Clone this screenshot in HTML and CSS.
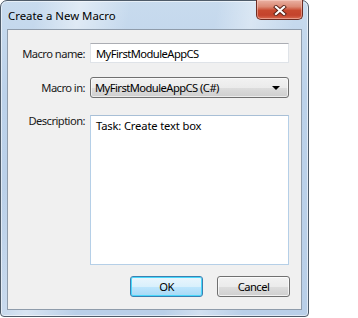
FILE: index.html
```html
<!DOCTYPE html>
<html lang="en">
<head>
  <title>Create a New Macro</title>
  <meta charset="utf-8"/>
  <link rel="stylesheet" href="styles.css">
</head>
<body>

  <div class="window">
    <div class="titlebar">
      <span class="title">Create a New Macro</span>
      <button type="button" class="close" aria-label="Close">
        <svg width="14" height="11" viewBox="0 0 14 11">
          <path d="M3 2 L11 9 M11 2 L3 9" stroke="#5a2218" stroke-width="4" stroke-linecap="square"/>
          <path d="M3 2 L11 9 M11 2 L3 9" stroke="#ffffff" stroke-width="2.2" stroke-linecap="square"/>
        </svg>
      </button>
    </div>

    <div class="client">
      <div class="form">
        <label for="name" class="label label-mid">Macro name:</label>
        <input type="text" id="name" class="textbox" value="MyFirstModuleAppCS">

        <label for="project" class="label label-mid">Macro in:</label>
        <div class="combo" id="project">
          <span>MyFirstModuleAppCS (C#)</span>
          <span class="arrow"></span>
        </div>

        <label for="desc" class="label label-top">Description:</label>
        <textarea id="desc" class="textarea">Task: Create text box</textarea>
      </div>

      <div class="buttons">
        <button type="button" class="btn btn-default">OK</button>
        <button type="button" class="btn">Cancel</button>
      </div>
    </div>
  </div>

</body>
</html>
```

FILE: styles.css
```css
    html, body {
      margin: 0;
      padding: 0;
      background: #ffffff;
    }

    body {
      font-family: "Noto Sans", "Open Sans", sans-serif;
      font-size: 11.2px;
      letter-spacing: -0.55px;
      color: #000;
    }

    .window {
      box-sizing: border-box;
      width: 309px;
      height: 317px;
      border: 1px solid #4e5b69;
      border-radius: 7px 7px 4px 4px;
      padding: 0 6px 6px 6px;
      display: flex;
      flex-direction: column;
      background:
        linear-gradient(100deg, rgba(255,255,255,0) 10%, rgba(255,255,255,0.45) 22%, rgba(255,255,255,0) 36%, rgba(255,255,255,0) 60%, rgba(255,255,255,0.35) 70%, rgba(255,255,255,0) 82%),
        linear-gradient(#c8dbee, #bcd2ea 30%, #b9cfe8);
      box-shadow: inset 0 0 0 1px rgba(255,255,255,0.55);
    }

    .titlebar {
      height: 28px;
      display: flex;
      align-items: flex-start;
      margin-right: -1px;
    }

    .title {
      padding-top: 7px;
      padding-left: 1px;
      font-size: 11.4px;
      letter-spacing: 0;
      color: #000;
    }

    .close {
      margin-left: auto;
      margin-top: -1px;
      width: 47px;
      height: 20px;
      padding: 0;
      border: 1px solid #6e2c22;
      border-top: none;
      border-radius: 0 0 5px 5px;
      background: linear-gradient(#eab2a4, #dc8a75 35%, #c8492f 55%, #c4432c 80%, #d86a50);
      box-shadow: inset 0 0 0 1px rgba(255,220,210,0.45);
      display: flex;
      align-items: center;
      justify-content: center;
    }

    .close svg {
      display: block;
      margin-top: 1px;
    }

    .client {
      flex: 1;
      background: #f0f0f0;
      border: 1px solid #8f9cab;
      display: flex;
      flex-direction: column;
      padding: 13px 11px 12px 0;
    }

    .form {
      display: grid;
      grid-template-columns: 77px 199px;
      column-gap: 5px;
      grid-template-rows: 20px 21px 150px;
      row-gap: 14px;
    }

    .form .textarea {
      margin-top: 3px;
    }

    .label {
      text-align: right;
      color: #1a1a1a;
      white-space: nowrap;
    }

    .label-mid {
      align-self: center;
    }

    .label-top {
      margin-top: 1px;
    }

    .textbox {
      box-sizing: border-box;
      height: 20px;
      margin: 0;
      padding: 0 5px;
      border: 1px solid #dfe3e8;
      border-top-color: #abadb3;
      background: #ffffff;
      font-family: inherit;
      font-size: 11.2px;
      letter-spacing: inherit;
      color: #000;
    }

    .combo {
      box-sizing: border-box;
      height: 21px;
      display: flex;
      align-items: center;
      padding: 0 8px 0 4px;
      border: 1px solid #707070;
      border-radius: 3px;
      background: linear-gradient(#f2f2f2, #ebebeb 50%, #dddddd 51%, #cfcfcf);
      box-shadow: inset 0 0 0 1px rgba(255,255,255,0.6);
    }

    .arrow {
      margin-left: auto;
      width: 0;
      height: 0;
      border-left: 4px solid transparent;
      border-right: 4px solid transparent;
      border-top: 4px solid #000;
    }

    .textarea {
      box-sizing: border-box;
      height: 150px;
      margin: 0;
      padding: 2px 5px;
      border: 1px solid #b5cfe7;
      border-top-color: #a8bfd6;
      background: #ffffff;
      font-family: inherit;
      font-size: 11.2px;
      letter-spacing: -0.15px;
      color: #000;
      resize: none;
      overflow: hidden;
    }

    .buttons {
      margin-top: auto;
      display: flex;
      justify-content: flex-end;
      gap: 14px;
    }

    .btn {
      box-sizing: border-box;
      width: 73px;
      height: 21px;
      padding: 0;
      border: 1px solid #707070;
      border-radius: 3px;
      background: linear-gradient(#f2f2f2, #ebebeb 50%, #dddddd 51%, #cfcfcf);
      box-shadow: inset 0 0 0 1px rgba(255,255,255,0.7);
      font-family: inherit;
      font-size: 11.2px;
      letter-spacing: inherit;
      color: #000;
    }

    .btn-default {
      border-color: #3c7fb1;
      background: linear-gradient(#eaf6fd, #d9f0fc 50%, #bee6fd 51%, #a7d9f5);
      box-shadow: inset 0 0 0 1px #48d8fb;
    }
```
